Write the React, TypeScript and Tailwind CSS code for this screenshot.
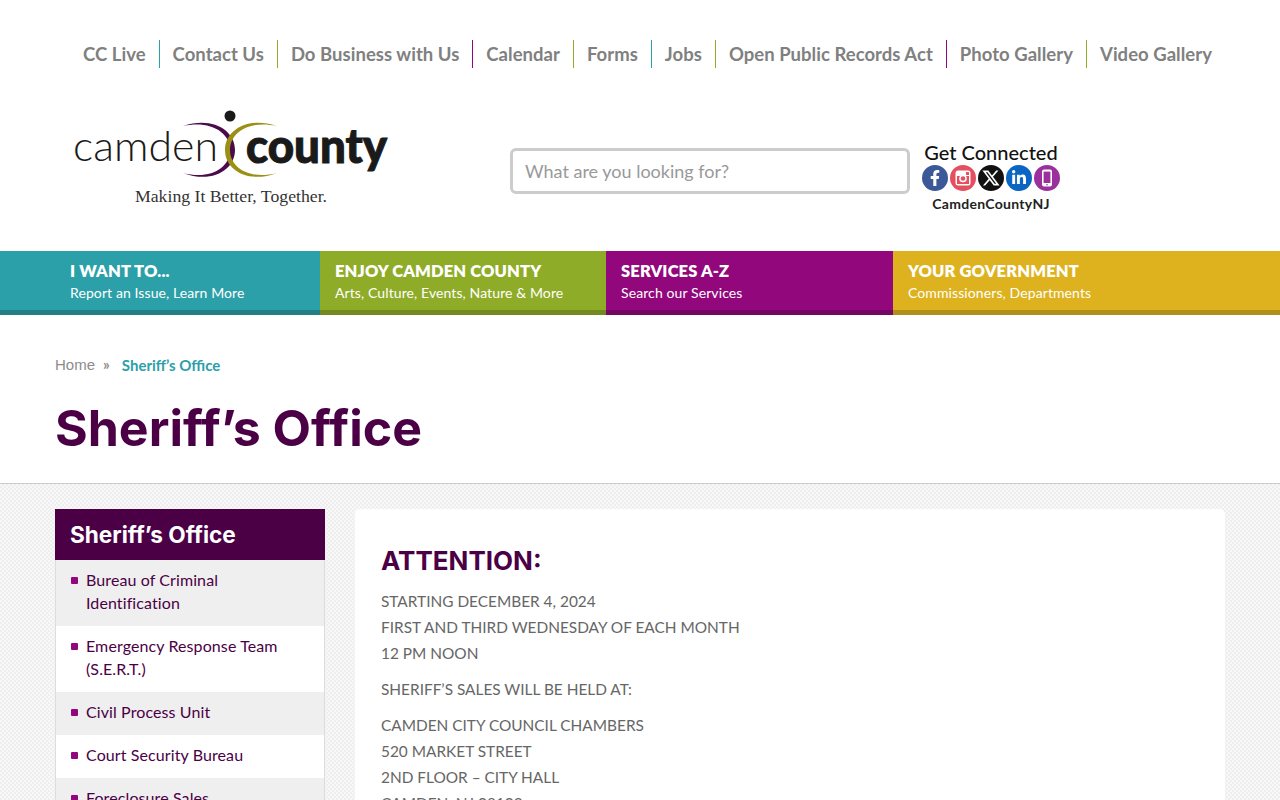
import React from 'react';
import { FaFacebookF, FaLinkedinIn } from 'react-icons/fa';
import { RiTwitterXLine } from 'react-icons/ri';

const TOP_LINKS = [
    { label: 'CC Live', border: 'border-[#2ca0a8]' },
    { label: 'Contact Us', border: 'border-[#8fac28]' },
    { label: 'Do Business with Us', border: 'border-[#92077c]' },
    { label: 'Calendar', border: 'border-[#8fac28]' },
    { label: 'Forms', border: 'border-[#2ca0a8]' },
    { label: 'Jobs', border: 'border-[#8fac28]' },
    { label: 'Open Public Records Act', border: 'border-[#92077c]' },
    { label: 'Photo Gallery', border: 'border-[#8fac28]' },
    { label: 'Video Gallery', border: 'border-transparent' },
];

const MENU = [
    { title: 'I WANT TO...', sub: 'Report an Issue, Learn More', box: 'w-[320px] pl-[70px] bg-[#2ca0a8] border-[#237f86]' },
    { title: 'ENJOY CAMDEN COUNTY', sub: 'Arts, Culture, Events, Nature & More', box: 'w-[286px] pl-[15px] bg-[#8fac28] border-[#738a20]' },
    { title: 'SERVICES A-Z', sub: 'Search our Services', box: 'w-[287px] pl-[15px] bg-[#92077c] border-[#750663]' },
    { title: 'YOUR GOVERNMENT', sub: 'Commissioners, Departments', box: 'flex-1 pl-[15px] bg-[#deb21e] border-[#b28f18]' },
];

const SIDE_LINKS = [
    { label: 'Bureau of Criminal Identification', bg: 'bg-[#efefef]' },
    { label: 'Emergency Response Team (S.E.R.T.)', bg: 'bg-white' },
    { label: 'Civil Process Unit', bg: 'bg-[#efefef]' },
    { label: 'Court Security Bureau', bg: 'bg-white' },
    { label: 'Foreclosure Sales', bg: 'bg-[#efefef]' },
];

const InstagramIcon = () => (
    <svg width="16" height="16" viewBox="0 0 16 16" xmlns="http://www.w3.org/2000/svg">
        <rect x="0.5" y="0.5" width="15" height="15" rx="2.5" fill="#ffffff" />
        <rect x="2" y="6" width="12" height="8" fill="#e4505f" />
        <circle cx="8" cy="8.5" r="3.8" fill="#ffffff" />
        <circle cx="8" cy="8.5" r="2.3" fill="#e4505f" />
        <rect x="11" y="2" width="3" height="3" rx="0.5" fill="#e4505f" />
    </svg>
);

const PhoneIcon = () => (
    <svg width="12" height="18" viewBox="0 0 12 18" xmlns="http://www.w3.org/2000/svg">
        <rect x="1" y="0.5" width="10" height="17" rx="2" fill="#ffffff" />
        <rect x="2.6" y="2.6" width="6.8" height="11.4" fill="#9b2f9b" />
        <circle cx="6" cy="15.8" r="0.8" fill="#9b2f9b" />
    </svg>
);

const SOCIAL = [
    { icon: <FaFacebookF size={16} />, bg: 'bg-[#3b5998]' },
    { icon: <InstagramIcon />, bg: 'bg-[#e4505f]' },
    { icon: <RiTwitterXLine size={20} />, bg: 'bg-[#111111]' },
    { icon: <FaLinkedinIn size={16} />, bg: 'bg-[#0a66c2]' },
    { icon: <PhoneIcon />, bg: 'bg-[#9b2f9b]' },
];

const Logo = () => (
    <svg width="320" height="100" viewBox="0 0 320 100" fill="none" xmlns="http://www.w3.org/2000/svg">
        <circle cx="158" cy="8" r="5.5" fill="#1a1a1a" />
        <text x="1" y="53" fontFamily="Lato, sans-serif" fontSize="41" fontWeight="300" fill="#1a1a1a" textLength="145" lengthAdjust="spacingAndGlyphs">camden</text>
        <text x="174" y="55" fontFamily="Lato, sans-serif" fontSize="47" fontWeight="900" fill="#1a1a1a" stroke="#1a1a1a" strokeWidth="1" textLength="141" lengthAdjust="spacingAndGlyphs">county</text>
        <path d="M111 18 C140 8 163 22 163 42 C163 62 140 76 111 65 C138 72 158 60 158 42 C158 24 138 12 111 18 Z" fill="#4c0a4a" />
        <path d="M205 18 C176 8 153 22 153 42 C153 62 176 76 205 65 C178 72 158 60 158 42 C158 24 178 12 205 18 Z" fill="#9a9016" />
        <text x="63" y="94" fontFamily="'Liberation Serif', serif" fontSize="17" fill="#333333" textLength="192" lengthAdjust="spacingAndGlyphs">Making It Better, Together.</text>
    </svg>
);

export default function App() {
    return (
        <div className="h-[800px] overflow-hidden bg-white font-['Lato',sans-serif]">
            <nav className="flex h-[108px] items-start pl-[70px] pt-[40px]">
                {TOP_LINKS.map((link) => (
                    <a key={link.label} className={`h-[28px] border-r px-[13px] text-[18.5px] font-bold leading-[28px] tracking-[0.03px] whitespace-nowrap text-[#808080] ${link.border}`}>
                        {link.label}
                    </a>
                ))}
            </nav>

            <header className="flex h-[143px] items-start pl-[72px]">
                <Logo />
                <div className="ml-[118px] mt-[40px] flex h-[46px] w-[400px] items-center rounded-[6px] border-[3px] border-[#cccccc] px-[12px] text-[18px] text-[#999999]">
                    What are you looking for?
                </div>
                <div className="ml-[12px] mt-[33px] flex w-[138px] flex-col items-center">
                    <div className="-mt-px text-[20px] leading-[24px] font-medium whitespace-nowrap text-[#111111]">Get Connected</div>
                    <div className="mt-px flex gap-[2px]">
                        {SOCIAL.map((s, i) => (
                            <span key={i} className={`flex h-[26px] w-[26px] items-center justify-center rounded-full text-white ${s.bg}`}>
                                {s.icon}
                            </span>
                        ))}
                    </div>
                    <div className="mt-[3px] text-[14px] leading-[20px] font-bold tracking-[0.3px] text-[#222222]">CamdenCountyNJ</div>
                </div>
            </header>

            <div className="flex h-[64px]">
                {MENU.map((m) => (
                    <div key={m.title} className={`border-b-[5px] pt-[9px] text-white ${m.box}`}>
                        <div className="text-[16.5px] leading-[22px] font-extrabold tracking-[0.15px] whitespace-nowrap">{m.title}</div>
                        <div className="text-[14px] leading-[22px] tracking-[0.1px] whitespace-nowrap">{m.sub}</div>
                    </div>
                ))}
            </div>

            <section className="h-[169px] border-b border-[#cccccc] px-[55px] pt-[40px]">
                <div className="flex items-center text-[15px] leading-[20px]">
                    <span className="font-['Liberation_Sans',sans-serif] text-[#8c8c8c]">Home</span>
                    <span className="ml-[8px] -mt-[3px] font-bold text-[#8c8c8c]">»</span>
                    <span className="ml-[12px] font-bold text-[#2ca0a8]">Sheriff’s Office</span>
                </div>
                <h1 className="mt-[23px] font-['Inter',sans-serif] text-[50px] leading-[60px] font-bold text-[#4b0046]">Sheriff’s Office</h1>
            </section>

            <main className="flex h-[316px] gap-[30px] bg-[repeating-conic-gradient(#eeeeee_0_25%,#f8f8f8_0_50%)] bg-[length:4px_4px] px-[55px] pt-[25px]">
                <aside className="w-[270px] shrink-0">
                    <h2 className="h-[51px] bg-[#4b0046] px-[15px] font-['Inter',sans-serif] text-[22.6px] leading-[51px] font-bold text-white">Sheriff’s Office</h2>
                    <ul className="border-x border-[#dddddd]">
                        {SIDE_LINKS.map((item) => (
                            <li key={item.label} className={`relative pt-[8px] pb-[12px] pl-[30px] pr-[20px] text-[16px] leading-[23px] tracking-[0.1px] text-[#4b0046] ${item.bg}`}>
                                <span className="absolute left-[15px] top-[17px] h-[7px] w-[7px] rounded-[1px] bg-[#92077c]" />
                                {item.label}
                            </li>
                        ))}
                    </ul>
                </aside>

                <article className="flex-1 rounded-t-[5px] bg-white px-[26px] pt-[34px] text-[15.4px] leading-[26px] text-[#666666]">
                    <h2 className="mb-[9px] font-['Inter',sans-serif] text-[26px] leading-[36px] font-bold text-[#4b0046]">ATTENTION:</h2>
                    <p className="mb-[10px]">
                        STARTING DECEMBER 4, 2024<br />
                        FIRST AND THIRD WEDNESDAY OF EACH MONTH<br />
                        12 PM NOON
                    </p>
                    <p className="mb-[10px]">SHERIFF’S SALES WILL BE HELD AT:</p>
                    <p>
                        CAMDEN CITY COUNCIL CHAMBERS<br />
                        520 MARKET STREET<br />
                        2ND FLOOR – CITY HALL<br />
                        CAMDEN, NJ 08102
                    </p>
                </article>
            </main>
        </div>
    );
}
